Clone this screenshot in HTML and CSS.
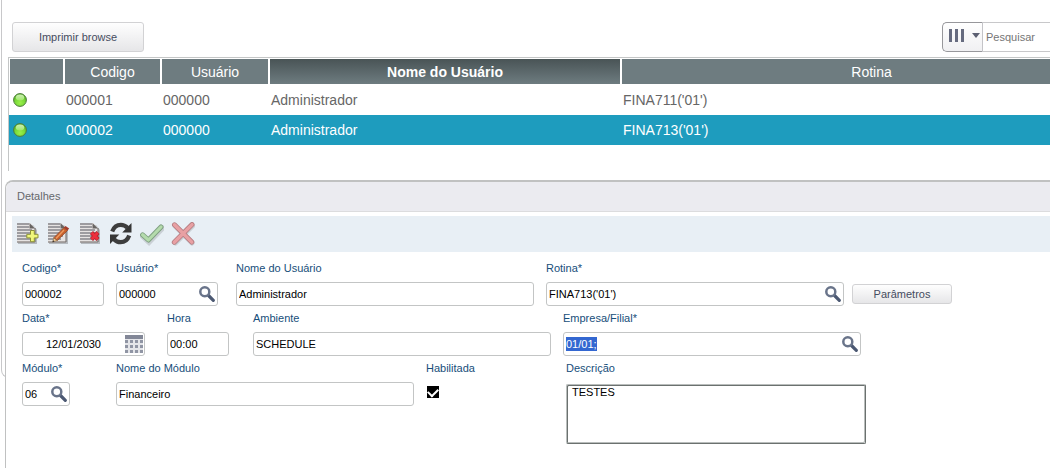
FILE: index.html
```html
<!DOCTYPE html>
<html lang="pt-BR">
<head>
<meta charset="utf-8">
<meta name="viewport" content="width=device-width, initial-scale=1">
<title>Detalhes</title>
<link rel="stylesheet" href="styles.css">
</head>
<body>
<svg class="defs" aria-hidden="true">
  <defs>
    <radialGradient id="led" cx=".5" cy=".72" r=".65"><stop offset="0" stop-color="#9bf04a"/><stop offset=".6" stop-color="#78d838"/><stop offset="1" stop-color="#58b428"/></radialGradient>
    <linearGradient id="gloss" x1="0" y1="0" x2="0" y2="1"><stop offset="0" stop-color="#e6fbd3"/><stop offset="1" stop-color="#a6e974"/></linearGradient>
    <symbol id="doc" viewBox="0 0 24 24">
      <path d="M2 3h15l4 5v14H2z" fill="#000" opacity=".22"/>
      <path d="M1 1h13l5 5v14.500H1z" fill="#e6e3e2"/>
      <path d="M1 20h18V6" fill="none" stroke="#6f6665"/>
      <path d="M13.500 1L19 6.500h-5.500z" fill="#686563"/>
      <path d="M1 2h12M1 5h12M1 8h15M1 11h15M1 14h15M1 17h13" stroke="#85858a" stroke-width="1.500"/>
    </symbol>
    <symbol id="lens" viewBox="0 0 16 16">
      <path d="M9.500 9.500l4.800 4.800" stroke="#4b5872" stroke-width="3.200" stroke-linecap="round"/>
      <circle cx="5.800" cy="5.800" r="4.500" fill="#fff" stroke="#69748a" stroke-width="2.500"/>
    </symbol>
    <symbol id="status" viewBox="0 0 14 14">
      <circle cx="7" cy="7" r="6.400" fill="url(#led)" stroke="#4d7a3c"/>
      <ellipse cx="7" cy="4.600" rx="4.200" ry="3" fill="url(#gloss)" opacity=".8"/>
    </symbol>
  </defs>
</svg>
<main class="page">
  <section class="browse">
    <div class="browse-bar">
      <button class="btn btn-print" type="button">Imprimir browse</button>
      <div class="search">
        <button class="search-columns" type="button" aria-label="Colunas">
          <svg width="34" height="16" viewBox="0 0 34 16"><path d="M1 1h3v13H1zM7 1h3v13H7zM13 1h3v13h-3z" fill="#666b7f"/><path d="M24 5h8l-4 5z" fill="#5c6072"/></svg>
        </button>
        <input class="search-input" type="text" placeholder="Pesquisar" aria-label="Pesquisar">
      </div>
    </div>
    <div class="grid-frame">
      <table class="grid">
        <colgroup><col class="col-status"><col class="col-code"><col class="col-user"><col class="col-name"><col></colgroup>
        <thead>
          <tr><th></th><th>Codigo</th><th>Usuário</th><th class="sorted">Nome do Usuário</th><th>Rotina</th></tr>
        </thead>
        <tbody>
          <tr><td><svg class="led" role="img" aria-label="Ativo"><use href="#status"/></svg></td><td>000001</td><td>000000</td><td>Administrador</td><td>FINA711('01')</td></tr>
          <tr class="selected"><td><svg class="led" role="img" aria-label="Ativo"><use href="#status"/></svg></td><td>000002</td><td>000000</td><td>Administrador</td><td>FINA713('01')</td></tr>
        </tbody>
      </table>
    </div>
  </section>

  <section class="details">
    <h2 class="details-title">Detalhes</h2>
    <div class="details-body">
      <div class="toolbar">
        <button class="tool" type="button" aria-label="Incluir">
          <svg viewBox="0 0 24 24"><use href="#doc"/><path d="M14.500 8.500h3.800v3.800H22v3.600h-3.700v3.800h-3.800v-3.800h-3.700v-3.600h3.700z" fill="#f0f77a" stroke="#8c9138"/></svg>
        </button>
        <button class="tool" type="button" aria-label="Alterar">
          <svg viewBox="0 0 24 24"><use href="#doc"/><path d="M17 5.500l3.500 3L10.300 18.500l-3.600-2.600z" fill="#c8602b" stroke="#874022" stroke-width=".7"/><path d="M17 8l-8 8.500" stroke="#ed9b60" stroke-width="1.300"/><path d="M17 5.500l1.500-1.600 3.700 2.700-1.700 1.900z" fill="#a33b2c"/><path d="M6.700 15.900l3.600 2.600-4.600 1.500z" fill="#f0ca92" stroke="#85603f" stroke-width=".6"/><path d="M5.500 20.300l.6-2 1.400 1.300z" fill="#333"/></svg>
        </button>
        <button class="tool" type="button" aria-label="Excluir">
          <svg viewBox="0 0 24 24"><g transform="translate(1)"><use href="#doc" width="24" height="24"/><path d="M12.500 10.500l6.500 7M19 10.500l-6.500 7" stroke="#a91f2b" stroke-width="4.200"/><path d="M12.700 10.700l6.100 6.600M18.800 10.700l-6.100 6.600" stroke="#ed2f3c" stroke-width="2.800"/></g></svg>
        </button>
        <button class="tool" type="button" aria-label="Atualizar">
          <svg viewBox="0 0 24 24"><g fill="none" stroke="#3d3d3d" stroke-width="4.200"><path d="M3.200 9.500C4.800 5 8 2.800 11.800 2.800c2.700 0 4.800 1 6.700 3"/><path d="M20.200 13.500c-1.600 4.500-4.800 6.700-8.600 6.700-2.700 0-4.800-1-6.700-3"/></g><path d="M22.500 1v9.500h-9.300zM1 22v-9.500h9.300z" fill="#363636"/></svg>
        </button>
        <button class="tool" type="button" aria-label="Confirmar">
          <svg viewBox="0 0 24 24"><path d="M2.500 14.500l6.500 6L23 6" fill="none" stroke="#000" stroke-opacity=".13" stroke-width="5" stroke-linecap="round"/><path d="M2.600 12.800l5.800 5.200L21 5" fill="none" stroke="#7e9f80" stroke-width="5" stroke-linecap="round" stroke-linejoin="round"/><path d="M2.600 12.800l5.800 5.200L21 5" fill="none" stroke="#b4dbac" stroke-width="3.200" stroke-linecap="round" stroke-linejoin="round"/></svg>
        </button>
        <button class="tool" type="button" aria-label="Cancelar">
          <svg viewBox="0 0 24 24"><path d="M4 4l17 17M21.500 4l-17 17" stroke="#000" stroke-opacity=".13" stroke-width="5" stroke-linecap="round"/><path d="M3.500 2.800l17.300 17.300M21 2.600L3.300 20.200" stroke="#b47c81" stroke-width="5" stroke-linecap="round"/><path d="M3.500 2.800l17.300 17.300M21 2.600L3.300 20.200" stroke="#e8a0a3" stroke-width="3.400" stroke-linecap="round"/></svg>
        </button>
      </div>

      <form class="form">
        <div class="form-row">
          <div class="field cell-94"><label for="codigo">Codigo*</label><div class="box w-82"><input id="codigo" type="text" value="000002"></div></div>
          <div class="field cell-120"><label for="usuario">Usuário*</label><div class="box w-102"><input id="usuario" type="text" value="000000"><button class="lookup" type="button" aria-label="Pesquisar usuário"><svg><use href="#lens"/></svg></button></div></div>
          <div class="field cell-310"><label for="nome">Nome do Usuário</label><div class="box w-298"><input id="nome" type="text" value="Administrador"></div></div>
          <div class="field cell-306"><label for="rotina">Rotina*</label><div class="box w-298"><input id="rotina" type="text" value="FINA713('01')"><button class="lookup" type="button" aria-label="Pesquisar rotina"><svg><use href="#lens"/></svg></button></div></div>
          <button class="btn btn-params" type="button">Parâmetros</button>
        </div>
        <div class="form-row">
          <div class="field cell-145"><label for="data">Data*</label><div class="box w-123"><input id="data" class="date" type="text" value="12/01/2030"><button class="calendar" type="button" aria-label="Calendário"><svg width="18" height="18" viewBox="0 0 18 18"><path d="M0 0h18v4H0z" fill="#828797"/><path d="M0 4h18v14H0z" fill="#e4e5e9"/><path d="M0 5h3v3H0zM5 5h3v3H5zM10 5h3v3h-3zM15 5h3v3h-3zM0 10h3v3H0zM5 10h3v3H5zM10 10h3v3h-3zM15 10h3v3h-3zM0 15h3v3H0zM5 15h3v3H5zM10 15h3v3h-3zM15 15h3v3h-3z" fill="#9095a4"/></svg></button></div></div>
          <div class="field cell-86"><label for="hora">Hora</label><div class="box w-62"><input id="hora" type="text" value="00:00"></div></div>
          <div class="field cell-310"><label for="ambiente">Ambiente</label><div class="box w-298"><input id="ambiente" type="text" value="SCHEDULE"></div></div>
          <div class="field cell-306"><label for="empresa">Empresa/Filial*</label><div class="box w-298"><input id="empresa" type="text" value="01/01;"><button class="lookup" type="button" aria-label="Pesquisar filial"><svg><use href="#lens"/></svg></button></div></div>
        </div>
        <div class="form-row">
          <div class="field cell-94"><label for="modulo">Módulo*</label><div class="box w-48"><input id="modulo" type="text" value="06"><button class="lookup" type="button" aria-label="Pesquisar módulo"><svg><use href="#lens"/></svg></button></div></div>
          <div class="field cell-310"><label for="nome-modulo">Nome do Módulo</label><div class="box w-298"><input id="nome-modulo" type="text" value="Financeiro"></div></div>
          <div class="field cell-140"><label for="habilitada">Habilitada</label><input id="habilitada" class="check" type="checkbox" checked></div>
          <div class="field"><label for="descricao">Descrição</label><textarea id="descricao" class="notes">TESTES</textarea></div>
        </div>
      </form>
    </div>
  </section>
</main>
<script src="script.js"></script>
</body>
</html>
```
FILE: styles.css
```css
* { box-sizing: border-box; }
html, body { margin: 0; min-height: 100%; }
body {
  background: #fff;
  color: #666;
  font: 11px/14px "Liberation Sans", Arial, sans-serif;
  overflow: hidden;
}
button, input, textarea { font: inherit; margin: 0; }
.defs { position: absolute; width: 0; height: 0; }
.page {
  position: relative;
  display: flex;
  flex-direction: column;
  min-height: 100vh;
}
/* outer frame that continues beneath the details panel */
.page::before {
  content: "";
  position: absolute;
  z-index: -1;
  top: 0;
  bottom: 90px;
  left: 1px;
  width: 20px;
  border: solid #c8c8ca;
  border-width: 0 0 1px 1px;
  border-radius: 0 0 0 8px;
}

.browse { padding: 22px 0 9px 8px; }
.browse-bar {
  display: flex;
  justify-content: space-between;
  padding-left: 4px;
  margin-bottom: 5px;
}
.btn {
  padding: 0;
  border: 1px solid #d2d2d4;
  border-radius: 3px;
  background: linear-gradient(#fefefe, #e6e6e8);
  color: #464c60;
}
.btn-print { width: 132px; height: 30px; }
.btn-params { width: 100px; height: 20px; margin-top: 23px; }
.search { display: flex; }
.search-columns {
  display: flex;
  align-items: center;
  width: 41px;
  height: 30px;
  padding: 0 0 2px 5px;
  border: 1px solid #97979b;
  border-right-color: #c4c4c8;
  border-radius: 5px 0 0 5px;
  background: linear-gradient(#fff, #f0f0f2);
}
.search-input {
  width: 67px;
  height: 30px;
  padding: 0 3px;
  border: solid #c8c8ca;
  border-width: 1px 0;
}
.search-input::placeholder { color: #757575; }

.grid-frame {
  height: 114px;
  padding-top: 1px;
  overflow: hidden;
  border: solid #c4c6c6;
  border-width: 1px 0 0 1px;
}
.grid {
  width: calc(100% + 72px);
  table-layout: fixed;
  border-collapse: separate;
  border-spacing: 0;
  font-size: 14px;
  line-height: 16px;
}
.col-status { width: 55px; }
.col-code { width: 97px; }
.col-user { width: 108px; }
.col-name { width: 352px; }
.grid th {
  height: 25px;
  padding: 0;
  border: solid #fff;
  border-width: 0 1px;
  background: #6e7c80;
  background-clip: padding-box;
  color: #fff;
  font-weight: 400;
}
.grid .sorted {
  background: linear-gradient(#495456, #6e7c80) padding-box;
  font-weight: 700;
}
.grid td { height: 30px; padding: 0 2px; white-space: nowrap; }
.grid tbody tr:first-child td { height: 31px; }
.grid .selected { background: #1e9cbe; color: #fff; }
.grid td:first-child { padding-left: 4px; }
.led { display: block; width: 14px; height: 14px; }

.details {
  flex: 1;
  margin-left: 5px;
  border: solid #c0c1c1;
  border-width: 2px 0 0 1px;
  border-radius: 8px 0 0 0;
  background: #fff;
}
.details-title {
  margin: 0;
  padding: 7px 11px 8px;
  border-bottom: 1px solid #dcdcde;
  border-radius: 7px 0 0 0;
  background: #ebebf0;
  color: #66686c;
  font-size: 11px;
  font-weight: 400;
}
.details-body { padding: 4px 0 0 6px; }
.toolbar {
  display: flex;
  gap: 7px;
  padding: 6px 4px;
  background: #e8eff5;
}
.tool { width: 24px; height: 24px; padding: 0; border: 0; background: none; }
.tool svg { display: block; width: 24px; height: 24px; }

.form { padding: 9px 0 0 10px; }
.form-row { display: flex; align-items: flex-start; min-height: 50px; }
.field { display: flex; flex-direction: column; align-items: flex-start; flex: none; }
.field label { margin-bottom: 7px; color: #174e7a; }
.cell-86 { width: 86px; }
.cell-94 { width: 94px; }
.cell-120 { width: 120px; }
.cell-140 { width: 140px; }
.cell-145 { width: 145px; }
.cell-306 { width: 306px; }
.cell-310 { width: 310px; }
.box {
  display: flex;
  align-items: center;
  height: 24px;
  border: 1px solid #c3c5c5;
  border-radius: 3px;
  background: #fff;
}
.w-48 { width: 48px; }
.w-62 { width: 62px; }
.w-82 { width: 82px; }
.w-102 { width: 102px; }
.w-123 { width: 123px; }
.w-298 { width: 298px; }
.box input {
  flex: 1;
  min-width: 0;
  padding: 0 2px;
  border: 0;
  outline: 0;
  background: none;
  color: #000;
}
.box .date { padding-right: 24px; text-align: right; }
.box input::selection { background: #3367d1; color: #fff; }
.lookup, .calendar { flex: none; padding: 0; border: 0; background: none; }
.lookup { margin-right: 2px; }
.calendar { margin-right: 1px; }
.lookup svg { display: block; width: 16px; height: 16px; }
.calendar svg { display: block; }
.check {
  display: flex;
  justify-content: center;
  appearance: none;
  width: 12px;
  height: 12px;
  margin: 4px 0 0 1px;
  padding-top: 2px;
  background: #000;
}
.check:checked::before {
  content: "";
  width: 8px;
  height: 5px;
  border: solid #fff;
  border-width: 0 0 2px 2px;
  transform: rotate(-45deg);
}
.notes {
  width: 300px;
  height: 60px;
  margin-top: 2px;
  padding: 0 5px;
  resize: none;
  outline: 0;
  border: 1px solid;
  border-color: #b9bdbc #6b716f #6b716f #b9bdbc;
  border-radius: 2px;
  box-shadow: inset 1px 1px #6b716f, inset -1px -1px #b9bdbc;
  color: #000;
}
```
FILE: script.js
```js
const company = document.getElementById("empresa");
company.focus();
company.select();
```
